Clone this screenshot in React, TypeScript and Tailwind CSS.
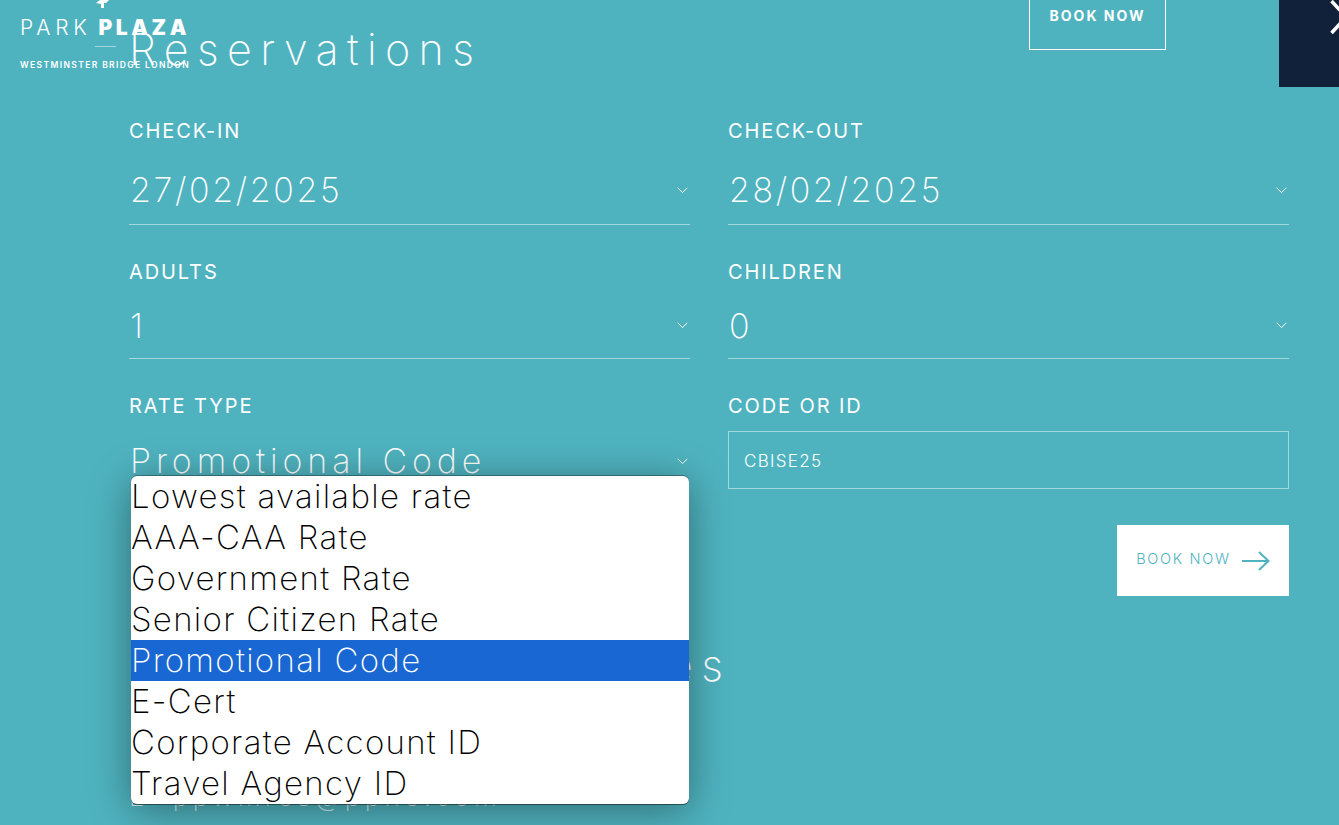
const F = "font-['Inter','Liberation_Sans',sans-serif]";

function Chevron() {
  return (
    <svg width="11" height="7" viewBox="0 0 11 7" fill="none" className="shrink-0">
      <path d="M0.7 0.8 L5.5 5.6 L10.3 0.8" stroke="#ffffff" strokeWidth="1" />
    </svg>
  );
}

function Field({ label, value, h }: { label: string; value: string; h: string }) {
  return (
    <div className="flex flex-col">
      <div className="text-[20px] leading-[24px] font-normal tracking-[1.9px] text-white">{label}</div>
      <div className={`flex items-center justify-between border-b border-[#a5d8de] pl-[1px] pr-[2px] ${h}`}>
        <span className="text-[34px] leading-[40px] font-[250] tracking-[2.6px] text-white">{value}</span>
        <Chevron />
      </div>
    </div>
  );
}

const OPTIONS = [
  "Lowest available rate",
  "AAA-CAA Rate",
  "Government Rate",
  "Senior Citizen Rate",
  "Promotional Code",
  "E-Cert",
  "Corporate Account ID",
  "Travel Agency ID",
];

export default function App() {
  return (
    <div className={`relative h-[825px] w-[1339px] overflow-hidden bg-[#4fb3bf] text-white ${F}`}>
      {/* logo */}
      <div className="absolute left-[20px] top-0 z-10 flex w-[170px] flex-col items-center">
        <svg width="14" height="8" viewBox="0 0 14 8" className="ml-[-4px]" fill="#ffffff">
          <path d="M4 0 H13 L10 3 H8 V8 H5 V4 L0 3 Z" />
        </svg>
        <div className="mt-[10px] flex w-full justify-between text-[21px] leading-[20px]">
          <span className="font-light tracking-[4.7px]">PARK</span>
          <span className="font-black tracking-[3.6px]">PLAZA</span>
        </div>
        <div className="mt-[8px] h-px w-[21px] bg-[#a5d8de]" />
        <div className="mt-[12px] w-full whitespace-nowrap text-[8.5px] leading-[12px] font-semibold tracking-[1.38px]">WESTMINSTER BRIDGE LONDON</div>
      </div>

      {/* top book button */}
      <div className="absolute left-[1029px] top-[-10px] z-10 flex h-[60px] w-[137px] justify-center border border-white pt-[15px] text-[14px] leading-[20px] font-bold tracking-[2px]">
        BOOK NOW
      </div>

      {/* close tile */}
      <div className="absolute right-0 top-0 z-10 h-[87px] w-[60px] overflow-hidden bg-[#12213a]">
        <svg width="60" height="40" viewBox="0 0 60 40" className="absolute left-0 top-0">
          <path d="M52.5 1 L72 22 M52.5 33 L72 12" stroke="#ffffff" strokeWidth="3.5" fill="none" />
        </svg>
      </div>

      <main className="flex flex-col pl-[129px] pr-[50px] pt-[25px]">
        <h1 className="text-[43px] leading-[48px] font-[250] tracking-[8.4px]">Reservations</h1>

        <div className="mt-[46px] grid grid-cols-[561px_561px] gap-x-[38px]">
          <Field label="CHECK-IN" value="27/02/2025" h="h-[82px] pt-[13px]" />
          <Field label="CHECK-OUT" value="28/02/2025" h="h-[82px] pt-[13px]" />
        </div>

        <div className="mt-[35px] grid grid-cols-[561px_561px] gap-x-[38px]">
          <Field label="ADULTS" value="1" h="h-[75px] pt-[9px]" />
          <Field label="CHILDREN" value="0" h="h-[75px] pt-[9px]" />
        </div>

        <div className="mt-[35px] grid grid-cols-[561px_561px] gap-x-[38px]">
          <div className="flex flex-col">
            <div className="text-[20px] leading-[24px] tracking-[1.9px]">RATE TYPE</div>
            <div className="flex h-[74px] items-center justify-between pl-[1px] pr-[2px] pt-[12px]">
              <span className="text-[34px] leading-[40px] font-[250] tracking-[4.9px]">Promotional Code</span>
              <Chevron />
            </div>
          </div>
          <div className="flex flex-col">
            <div className="text-[20px] leading-[24px] tracking-[1.9px]">CODE OR ID</div>
            <div className="mt-[13px] flex h-[58px] items-center border border-[#a5d8de] pl-[15px] pt-[3px] text-[17px] font-light tracking-[1.3px]">CBISE25</div>
            <button className="mt-[36px] ml-auto flex h-[71px] w-[172px] items-center justify-center gap-[11px] bg-white text-[#4fb3bf]">
              <span className="pb-[3px] text-[14.5px] font-light tracking-[1.7px]">BOOK NOW</span>
              <svg width="28" height="20" viewBox="0 0 28 20" fill="none">
                <path d="M0 10 H26 M17 1 L26.5 10 L17 19" stroke="#4fb3bf" strokeWidth="2" />
              </svg>
            </button>
          </div>
        </div>

        <h2 className="mt-[45px] whitespace-nowrap text-[43px] leading-[48px] font-[250] tracking-[8.45px]">Reservation Enquiries</h2>
        <div className="mt-[91px] flex gap-[24px] text-[26px] leading-[34px] font-extralight tracking-[4.5px] text-[#d8eef0]">
          <span>E</span>
          <span>ppwmres@pphe.com</span>
        </div>
      </main>

      {/* open rate-type list */}
      <ul className="absolute left-[131px] top-[476px] z-20 w-[558px] overflow-hidden rounded-[6px] bg-white shadow-[0_1px_0_rgba(0,0,0,0.45),0_-1px_0_rgba(0,0,0,0.3),0_6px_40px_rgba(0,0,0,0.4)]">
        {OPTIONS.map((o) => (
          <li
            key={o}
            className={`h-[41px] whitespace-nowrap text-[33px] leading-[41px] font-[250] tracking-[1.3px] ${o === "Promotional Code" ? "bg-[#1967d2] text-white" : "text-black"}`}
          >
            {o}
          </li>
        ))}
      </ul>
    </div>
  );
}
